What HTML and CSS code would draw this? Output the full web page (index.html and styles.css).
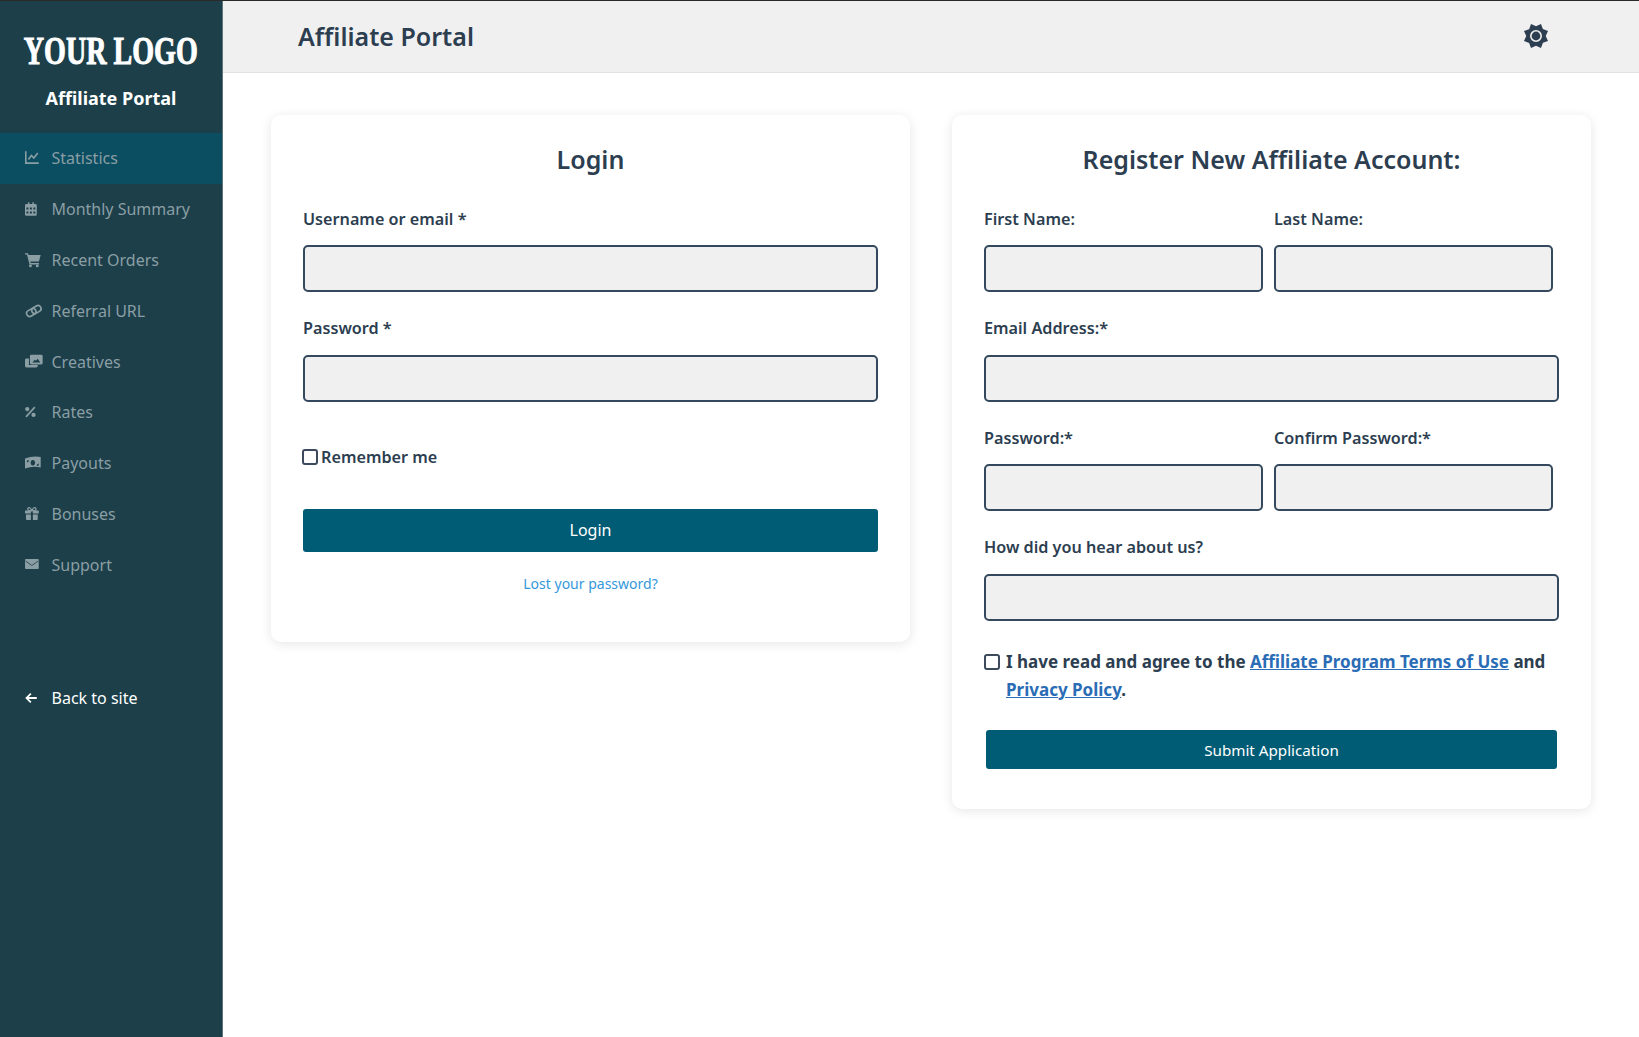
FILE: index.html
```html
<!DOCTYPE html>
<html lang="en">
<head>
    <meta charset="UTF-8">
    <meta name="viewport" content="width=device-width, initial-scale=1.0">
    <title>Affiliate Portal</title>
    <link rel="stylesheet" href="styles.css">
</head>
<body>
    <aside class="sidebar">
        <div class="brand">
            <div class="brand-logo"><span>YOUR LOGO</span></div>
            <div class="brand-name">Affiliate Portal</div>
        </div>
        <nav class="side-nav">
            <a class="nav-item active" href="#">
                <svg class="nav-icon" viewBox="0 0 27 16"><path d="M.8 1v12.200H14" fill="none" stroke="currentColor" stroke-width="1.600"/><path d="M3.500 9.500 6.500 5.500 9 8l4-5" fill="none" stroke="currentColor" stroke-width="1.600"/></svg>
                <span>Statistics</span>
            </a>
            <a class="nav-item" href="#">
                <svg class="nav-icon" viewBox="0 0 27 16"><path fill="currentColor" fill-rule="evenodd" d="M3 1h1.500v2h3V1H9v2h1.500A1.500 1.500 0 0 1 12 4.500v9a1.500 1.500 0 0 1-1.500 1.500h-9A1.500 1.500 0 0 1 0 13.500v-9A1.500 1.500 0 0 1 1.500 3H3zM1.500 6.500v2h2v-2zm3.500 0v2h2v-2zm3.500 0v2h2v-2zM1.500 10.500v2h2v-2zm3.500 0v2h2v-2zm3.500 0v2h2v-2z"/></svg>
                <span>Monthly Summary</span>
            </a>
            <a class="nav-item" href="#">
                <svg class="nav-icon" viewBox="0 0 27 16"><path fill="currentColor" d="M0 1h3l.6 2H16l-1.800 6.500H5.400l.4 1.500h8.400v1.500H4.600L2 2.500H0z"/><circle cx="5.500" cy="14" r="1.500" fill="currentColor"/><circle cx="12.500" cy="14" r="1.500" fill="currentColor"/></svg>
                <span>Recent Orders</span>
            </a>
            <a class="nav-item" href="#">
                <svg class="nav-icon" viewBox="0 0 27 16"><g fill="none" stroke="currentColor" stroke-width="1.700" transform="rotate(-30 9 8)"><rect x="1" y="4.800" width="10" height="6.400" rx="3.200"/><rect x="7" y="4.800" width="10" height="6.400" rx="3.200"/></g></svg>
                <span>Referral URL</span>
            </a>
            <a class="nav-item" href="#">
                <svg class="nav-icon" viewBox="0 0 27 16"><path fill="currentColor" d="M1.500 4.500H4V11h9v1a1.500 1.500 0 0 1-1.500 1.500h-10A1.500 1.500 0 0 1 0 12V6a1.500 1.500 0 0 1 1.500-1.500z"/><path fill="currentColor" fill-rule="evenodd" d="M6.500.500h10A1.500 1.500 0 0 1 18 2v7a1.500 1.500 0 0 1-1.500 1.500h-10A1.500 1.500 0 0 1 5 9V2A1.500 1.500 0 0 1 6.500.500zm1 8h8L13 4.800l-1.800 1.900-1.200-.9z"/></svg>
                <span>Creatives</span>
            </a>
            <a class="nav-item" href="#">
                <svg class="nav-icon" viewBox="0 0 27 16"><circle cx="2.300" cy="5" r="2.200" fill="currentColor"/><circle cx="8.700" cy="11" r="2.200" fill="currentColor"/><path d="M1 13 10 3" stroke="currentColor" stroke-width="1.700"/></svg>
                <span>Rates</span>
            </a>
            <a class="nav-item" href="#">
                <svg class="nav-icon" viewBox="0 0 27 16"><path fill="currentColor" fill-rule="evenodd" d="M0 3.500Q8 .5 16 2v10.500Q8 11 0 13.500zM8 5a2.300 2.800 0 1 0 .01 0zM2 5.500v2A2.300 2.300 0 0 0 4 5zM14 10.500v-2A2.300 2.300 0 0 0 12 11z"/></svg>
                <span>Payouts</span>
            </a>
            <a class="nav-item" href="#">
                <svg class="nav-icon" viewBox="0 0 27 16"><path fill="currentColor" d="M1 8.500h5V14H2a1 1 0 0 1-1-1zm7 0h5V13a1 1 0 0 1-1 1H8zM0 4.500h6v3H0zm8 0h6v3H8z"/><path d="M7 4.500C5.500 1 2.800.8 2.800 3S5.500 4.500 7 4.500C8.500 4.500 11.200 5.200 11.200 3S8.500 1 7 4.500z" fill="none" stroke="currentColor" stroke-width="1.300"/></svg>
                <span>Bonuses</span>
            </a>
            <a class="nav-item" href="#">
                <svg class="nav-icon" viewBox="0 0 27 16"><path fill="currentColor" d="M1 2h12a1 1 0 0 1 1 1v8a1 1 0 0 1-1 1H1a1 1 0 0 1-1-1V3a1 1 0 0 1 1-1z"/><path d="M.5 4 7 8.500 13.500 4" fill="none" stroke="#1c3f4a" stroke-width="0.800"/></svg>
                <span>Support</span>
            </a>
            <a class="nav-item back-link" href="#">
                <svg class="nav-icon" viewBox="0 0 27 16"><path d="M12 8H1.500M6 3.500 1.500 8 6 12.500" fill="none" stroke="currentColor" stroke-width="1.800"/></svg>
                <span>Back to site</span>
            </a>
        </nav>
    </aside>

    <div class="main">
        <header class="topbar">
            <h1>Affiliate Portal</h1>
            <svg class="theme-icon" viewBox="0 0 28 28">
                <polygon fill="#2c3e50" transform="rotate(22.5 14 14)" points="14,1 17.700,5 23.200,4.800 23,10.300 27,14 23,17.700 23.200,23.200 17.700,23 14,27 10.300,23 4.800,23.200 5,17.700 1,14 5,10.300 4.800,4.800 10.300,5"/>
                <circle cx="14" cy="14" r="5.200" fill="none" stroke="#f0f0f0" stroke-width="1.600"/>
            </svg>
        </header>

        <div class="content">
            <section class="card login-card">
                <h2>Login</h2>
                <div class="field">
                    <label>Username or email *</label>
                    <input type="text">
                </div>
                <div class="field">
                    <label>Password *</label>
                    <input type="password">
                </div>
                <label class="remember"><span class="check"></span>Remember me</label>
                <button class="btn login-btn">Login</button>
                <a class="lost-link" href="#">Lost your password?</a>
            </section>

            <section class="card register-card">
                <h2>Register New Affiliate Account:</h2>
                <div class="field-row">
                    <div class="field">
                        <label>First Name:</label>
                        <input type="text">
                    </div>
                    <div class="field">
                        <label>Last Name:</label>
                        <input type="text">
                    </div>
                </div>
                <div class="field">
                    <label>Email Address:*</label>
                    <input type="text">
                </div>
                <div class="field-row">
                    <div class="field">
                        <label>Password:*</label>
                        <input type="password">
                    </div>
                    <div class="field">
                        <label>Confirm Password:*</label>
                        <input type="password">
                    </div>
                </div>
                <div class="field">
                    <label>How did you hear about us?</label>
                    <input type="text">
                </div>
                <div class="terms">
                    <span class="check"></span>
                    <p>I have read and agree to the <a href="#">Affiliate Program Terms of Use</a> and <a href="#">Privacy Policy</a>.</p>
                </div>
                <button class="btn submit-btn">Submit Application</button>
            </section>
        </div>
    </div>
</body>
</html>
```

FILE: styles.css
```css
* {
    margin: 0;
    padding: 0;
    box-sizing: border-box;
}

body, html {
    height: 100%;
    overflow: hidden;
}

body {
    display: flex;
    border-top: 1px solid #2a2a2a;
    font-family: "Noto Sans", "Open Sans", sans-serif;
    color: #2c3e50;
    background: #fff;
}

a {
    text-decoration: none;
}

/* sidebar */
.sidebar {
    flex: 0 0 223px;
    min-width: 0;
    background: #1c3f4a;
    border-right: 1px solid #5d767d;
}

.brand {
    height: 132px;
    padding-top: 31px;
    text-align: center;
    color: #fff;
}

.brand-logo {
    display: flex;
    justify-content: center;
    font-family: "Liberation Serif", serif;
    font-weight: bold;
    font-size: 39px;
    line-height: 38px;
    white-space: nowrap;
}

.brand-logo span {
    flex: none;
    transform: scaleX(0.72);
    -webkit-text-stroke: 1px #fff;
}

.brand-name {
    margin-top: 14px;
    font-size: 18px;
    line-height: 28px;
    font-weight: 700;
}

.nav-item {
    display: flex;
    align-items: center;
    height: 50.8px;
    padding-left: 25px;
    font-size: 16px;
    color: #8a9ea4;
}

.nav-item.active {
    background: #0b4d61;
}

.nav-icon {
    flex: 0 0 26.5px;
    width: 26.5px;
    height: 16px;
}

.back-link {
    margin-top: 82.5px;
    color: #fff;
}

/* top bar */
.main {
    flex: 1;
    min-width: 0;
}

.topbar {
    display: flex;
    align-items: center;
    justify-content: space-between;
    height: 72px;
    padding: 0 89px 2px 75px;
    background: #f0f0f0;
    border-bottom: 1px solid #e2e2e2;
}

.topbar h1 {
    font-size: 25px;
    font-weight: 600;
}

.theme-icon {
    width: 28px;
    height: 28px;
}

/* forms */
.content {
    display: grid;
    grid-template-columns: 639px 639px;
    gap: 42px;
    align-items: start;
    padding: 42px 48px 0;
}

.card {
    padding: 32px;
    background: #fff;
    border-radius: 10px;
    box-shadow: 0 2px 12px rgba(0, 0, 0, 0.1);
}

.card h2 {
    height: 26px;
    margin-bottom: 33.6px;
    font-size: 25px;
    line-height: 24px;
    font-weight: 600;
    text-align: center;
}

.field {
    margin-bottom: 24.2px;
}

.field label {
    display: block;
    height: 24px;
    margin-bottom: 14.4px;
    font-size: 16.2px;
    line-height: 24px;
    font-weight: 600;
}

.field input {
    display: block;
    width: 100%;
    height: 47px;
    background: #f0f0f0;
    border: 2px solid #34495e;
    border-radius: 5px;
}

.field-row {
    display: grid;
    grid-template-columns: 279px 279px;
    gap: 11px;
}

.check {
    flex: none;
    display: inline-block;
    width: 16px;
    height: 16px;
    border: 2px solid #3d4a5c;
    border-radius: 3px;
    background: #fff;
}

.remember {
    display: flex;
    align-items: center;
    gap: 3px;
    height: 24px;
    margin: 43px 0 40px -1px;
    font-size: 16.2px;
    font-weight: 600;
}

.btn {
    display: block;
    font-family: inherit;
    font-size: 16px;
    color: #fff;
    background: #005c75;
    border: 0;
    border-radius: 3px;
}

.login-btn {
    width: 100%;
    height: 43px;
}

.lost-link {
    display: block;
    margin-top: 20px;
    font-size: 14px;
    line-height: 24px;
    text-align: center;
    color: #3498db;
}

.login-card {
    padding-bottom: 46px;
}

.terms {
    display: flex;
    gap: 6px;
    margin-top: 27px;
    font-size: 17px;
    line-height: 28px;
    font-weight: 700;
}

.terms .check {
    margin-top: 6px;
}

.terms a {
    color: #2a6cb5;
    text-decoration: underline;
}

.submit-btn {
    width: 571px;
    height: 39px;
    margin: 26.5px 0 8px 2px;
    font-size: 15.2px;
}
```
